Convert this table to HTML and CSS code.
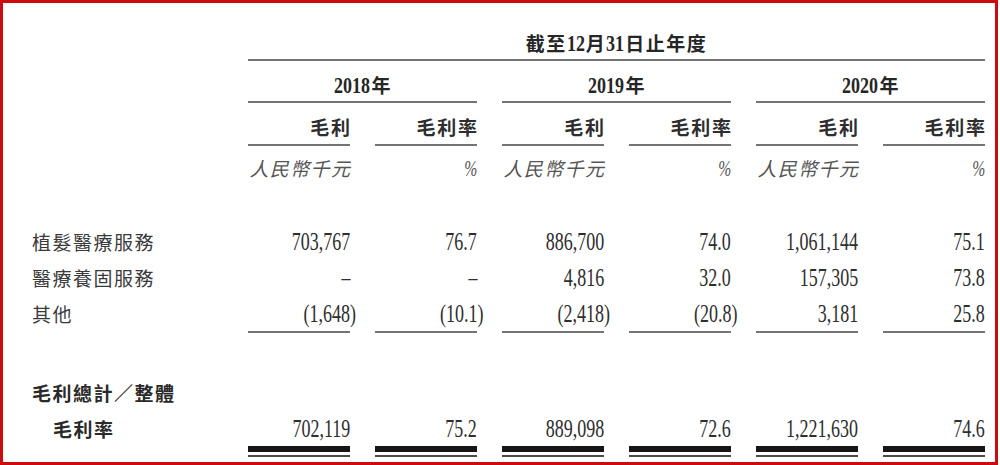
FILE: index.html
```html
<!DOCTYPE html>
<html lang="zh-Hant">
<head>
<meta charset="utf-8">
<link rel="stylesheet" href="styles.css">
</head>
<body>
<div class="sheet">
  <div class="grid">
    <div class="blank"></div>
    <div class="title span6">截至<span class="dg d2">12</span>月<span class="dg d2">31</span>日止年度</div>

    <div class="blank"></div>
    <div class="year span2"><span class="dg d4">2018</span>年</div>
    <div class="year span2"><span class="dg d4">2019</span>年</div>
    <div class="year span2"><span class="dg d4">2020</span>年</div>

    <div class="blank"></div>
    <div class="hd"><span class="t">毛利</span></div>
    <div class="hd"><span class="t">毛利率</span></div>
    <div class="hd"><span class="t">毛利</span></div>
    <div class="hd"><span class="t">毛利率</span></div>
    <div class="hd"><span class="t">毛利</span></div>
    <div class="hd"><span class="t">毛利率</span></div>

    <div class="blank"></div>
    <div class="unit"><span class="t">人民幣千元</span></div>
    <div class="unit pct"><span>%</span></div>
    <div class="unit"><span class="t">人民幣千元</span></div>
    <div class="unit pct"><span>%</span></div>
    <div class="unit"><span class="t">人民幣千元</span></div>
    <div class="unit pct"><span>%</span></div>

    <div class="gap1 full"></div>

    <div class="lbl">植髮醫療服務</div>
    <div class="n"><span>703,767</span></div>
    <div class="n"><span>76.7</span></div>
    <div class="n"><span>886,700</span></div>
    <div class="n"><span>74.0</span></div>
    <div class="n"><span>1,061,144</span></div>
    <div class="n"><span>75.1</span></div>

    <div class="lbl">醫療養固服務</div>
    <div class="n"><span>–</span></div>
    <div class="n"><span>–</span></div>
    <div class="n"><span>4,816</span></div>
    <div class="n"><span>32.0</span></div>
    <div class="n"><span>157,305</span></div>
    <div class="n"><span>73.8</span></div>

    <div class="lbl">其他</div>
    <div class="n ul"><span class="neg">(1,648)</span></div>
    <div class="n ul"><span class="neg">(10.1)</span></div>
    <div class="n ul"><span class="neg">(2,418)</span></div>
    <div class="n ul"><span class="neg">(20.8)</span></div>
    <div class="n ul"><span>3,181</span></div>
    <div class="n ul"><span>25.8</span></div>

    <div class="gap2 full"></div>

    <div class="lbl strong full">毛利總計／整體</div>

    <div class="lbl strong indent tot">毛利率</div>
    <div class="n tot"><span>702,119</span></div>
    <div class="n tot"><span>75.2</span></div>
    <div class="n tot"><span>889,098</span></div>
    <div class="n tot"><span>72.6</span></div>
    <div class="n tot"><span>1,221,630</span></div>
    <div class="n tot"><span>74.6</span></div>

    <div class="blank"></div>
    <div class="dbl"></div>
    <div class="dbl"></div>
    <div class="dbl"></div>
    <div class="dbl"></div>
    <div class="dbl"></div>
    <div class="dbl"></div>
  </div>
</div>
</body>
</html>
```

FILE: styles.css
```css
html, body {
  margin: 0;
  padding: 0;
  background: #ffffff;
}

.sheet {
  width: 998px;
  height: 465px;
  box-sizing: border-box;
  border: 3px solid #cc0a0f;
  background: #ffffff;
  overflow: hidden;
}

.grid {
  display: grid;
  grid-template-columns: 220px repeat(6, 102px);
  column-gap: 25px;
  font-family: "Noto Sans CJK TC", "Noto Sans CJK SC", sans-serif;
  color: #2a2a2a;
}

.span6 { grid-column: 2 / 8; }
.span2 { grid-column: span 2; }
.full { grid-column: 1 / -1; }

/* condensed serif digits inside CJK headings */
.dg {
  display: inline-block;
  font-family: "Liberation Serif", "Times New Roman", serif;
  font-size: 24px;
  font-weight: 700;
  letter-spacing: 0;
  transform: scaleX(0.75);
  transform-origin: 100% 50%;
}
.d2 { margin-left: -0.25em; margin-right: 1px; }
.d4 { margin-left: -0.5em; margin-right: 1px; }

.title {
  text-align: center;
  font-size: 19px;
  font-weight: 600;
  letter-spacing: 1.5px;
  line-height: 20px;
  height: 20px;
  padding: 30px 0 6px;
  border-bottom: 2px solid #747474;
  color: #262626;
  white-space: nowrap;
}

.year {
  text-align: center;
  font-size: 19px;
  font-weight: 600;
  line-height: 20px;
  height: 20px;
  padding: 14px 0 6px;
  border-bottom: 2px solid #747474;
  color: #262626;
  white-space: nowrap;
}

.hd {
  text-align: right;
  font-size: 19px;
  font-weight: 600;
  line-height: 20px;
  height: 20px;
  padding: 14px 0 7px;
  border-bottom: 2px solid #747474;
  color: #2e2e2e;
  white-space: nowrap;
}

.t {
  letter-spacing: 1.8px;
  margin-right: -1.8px;
}

.unit {
  text-align: right;
  font-size: 19px;
  font-style: italic;
  line-height: 20px;
  height: 20px;
  padding-top: 12px;
  color: #555;
  white-space: nowrap;
}
.unit .t {
  letter-spacing: 1.4px;
  margin-right: -1.4px;
}

.pct span {
  display: inline-block;
  font-family: "Liberation Serif", "Times New Roman", serif;
  font-size: 23px;
  font-style: italic;
  transform: scaleX(0.68);
  transform-origin: 100% 50%;
  color: #555;
}

.gap1 { height: 46px; }
.gap2 { height: 42px; }

.lbl {
  padding-left: 29px;
  font-size: 19px;
  letter-spacing: 1.5px;
  line-height: 36px;
  color: #3a3a3a;
  white-space: nowrap;
}

.strong {
  font-weight: 600;
  color: #2a2a2a;
}

.indent { padding-left: 50px; }

.n {
  text-align: right;
  font-family: "Liberation Serif", "Times New Roman", serif;
  font-size: 25px;
  line-height: 36px;
  color: #2e2e2e;
  white-space: nowrap;
}

.n span {
  display: inline-block;
  transform: scaleX(0.72);
  transform-origin: 100% 50%;
}

.n .neg { margin-right: -6px; }

.ul {
  line-height: 35px;
  border-bottom: 2px solid #747474;
}

.tot { line-height: 35px; }

.dbl {
  height: 11px;
  background: linear-gradient(#161616 0 6px, transparent 6px 9px, #4a4a4a 9px 11px);
}
```
